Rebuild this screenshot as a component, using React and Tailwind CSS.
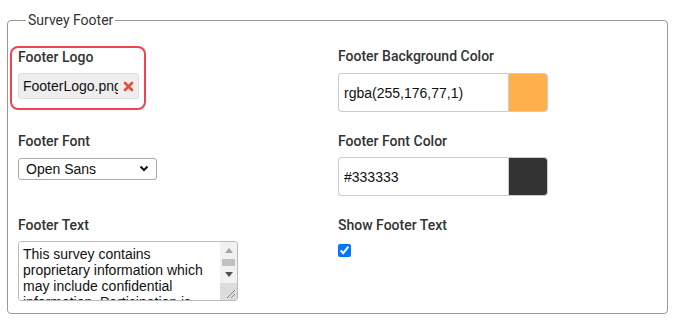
import { useState } from 'react';

const labelCls =
  "block text-[14px] leading-[18px] font-medium text-[#333] font-['Roboto',sans-serif]";

function ColorInput({ value, swatch }) {
  return (
    <div className="mt-[8px] flex h-[39px] w-[210px]">
      <input
        type="text"
        defaultValue={value}
        className="h-full w-[170px] rounded-l-[4px] border border-r-0 border-[#ccc] bg-white px-[5px] text-[14px] text-[#111] font-['Liberation_Sans',Arial,sans-serif] outline-none"
      />
      <div className={`h-full w-[40px] rounded-r-[4px] border border-[#ccc] ${swatch}`} />
    </div>
  );
}

export default function App() {
  const [show, setShow] = useState(true);
  const [font, setFont] = useState('Open Sans');

  return (
    <div className="min-h-screen bg-white pl-[7px] pt-[11px] font-['Roboto',sans-serif]">
      <fieldset className="w-[661px] rounded-[4px] border border-[#999] pl-[2px] pr-[16px] pt-[17px] pb-[12px]">
        <legend className="ml-[16px] px-[2px] text-[14px] leading-[18px] text-[#333]">Survey Footer</legend>

        <div className="grid grid-cols-[320px_320px] grid-rows-[84px_84px_auto]">
          {/* row 1 */}
          <div>
            <div className="w-[136px] rounded-[8px] border-2 border-[#ef4451] px-[6px] pb-[9px]">
              <label className={labelCls}>Footer Logo</label>
              <div className="mt-[7px] flex h-[26px] w-[121px] items-center rounded-[3px] border border-[#ddd] bg-[#eee] pl-[4px]">
                <span className="w-[95px] overflow-hidden whitespace-nowrap text-[14px] text-[#111] font-['Liberation_Sans',Arial,sans-serif]">
                  FooterLogo.png
                </span>
                <svg width="11" height="11" viewBox="0 0 11 11" className="ml-[5px]">
                  <path d="M2 2 L9 9 M9 2 L2 9" stroke="#e44b3b" strokeWidth="2.6" strokeLinecap="round" />
                </svg>
              </div>
            </div>
          </div>
          <div className="px-2 pt-[1px]">
            <label className={labelCls}>Footer Background Color</label>
            <ColorInput value="rgba(255,176,77,1)" swatch="bg-[#ffb04d]" />
          </div>

          {/* row 2 */}
          <div className="px-2 pt-[2px]">
            <label className={labelCls}>Footer Font</label>
            <div className="relative mt-[7px] h-[22px] w-[139px]">
              <select
                value={font}
                onChange={(e) => setFont(e.target.value)}
                className="h-full w-full appearance-none rounded-[3px] border border-[#aaa] bg-white pl-[7px] text-[14px] text-[#111] font-['Liberation_Sans',Arial,sans-serif] outline-none"
              >
                <option>Open Sans</option>
                <option>Roboto</option>
                <option>Lato</option>
              </select>
              <svg width="10" height="7" viewBox="0 0 10 7" className="pointer-events-none absolute right-[8px] top-[8px]">
                <path d="M1.5 1.5 L5 5 L8.5 1.5" fill="none" stroke="#111" strokeWidth="2" />
              </svg>
            </div>
          </div>
          <div className="px-2 pt-[2px]">
            <label className={labelCls}>Footer Font Color</label>
            <div className="-mt-[1px]">
              <ColorInput value="#333333" swatch="bg-[#333]" />
            </div>
          </div>

          {/* row 3 */}
          <div className="px-2 pt-[2px]">
            <label className={labelCls}>Footer Text</label>
            <div className="mt-[7px] flex h-[60px] w-[220px] overflow-hidden rounded-[3px] border border-[#bbb] bg-white">
              <textarea
                defaultValue="This survey contains proprietary information which may include confidential information. Participation is voluntary and all responses will be kept strictly confidential."
                className="block h-full min-w-0 flex-1 resize-none overflow-hidden bg-white pl-[4px] pr-[2px] pt-[4px] text-[14px] leading-[16px] text-[#111] font-['Liberation_Sans',Arial,sans-serif] outline-none"
              />
              {/* scrollbar column */}
              <div className="flex w-[17px] flex-col bg-[#f1f1f1]">
                <div className="flex h-[17px] items-center justify-center">
                  <svg width="8" height="5" viewBox="0 0 8 5">
                    <path d="M0 5 L4 0 L8 5 Z" fill="#a3a3a3" />
                  </svg>
                </div>
                <div className="mx-[2px] h-[7px] bg-[#c1c1c1]" />
                <div className="flex h-[17px] items-center justify-center">
                  <svg width="8" height="5" viewBox="0 0 8 5">
                    <path d="M0 0 L8 0 L4 5 Z" fill="#505050" />
                  </svg>
                </div>
                <div className="flex-1 bg-[#dcdcdc]">
                  <svg width="17" height="17" viewBox="0 0 17 17">
                    <path d="M15 7 L7 15 M15 11 L11 15" stroke="#8a8a8a" strokeWidth="1" />
                  </svg>
                </div>
              </div>
            </div>
          </div>
          <div className="px-2 pt-[2px]">
            <label className={labelCls}>Show Footer Text</label>
            <input
              type="checkbox"
              checked={show}
              onChange={(e) => setShow(e.target.checked)}
              className="mt-[10px] ml-0 block h-[13px] w-[13px]"
            />
          </div>
        </div>
      </fieldset>
    </div>
  );
}
